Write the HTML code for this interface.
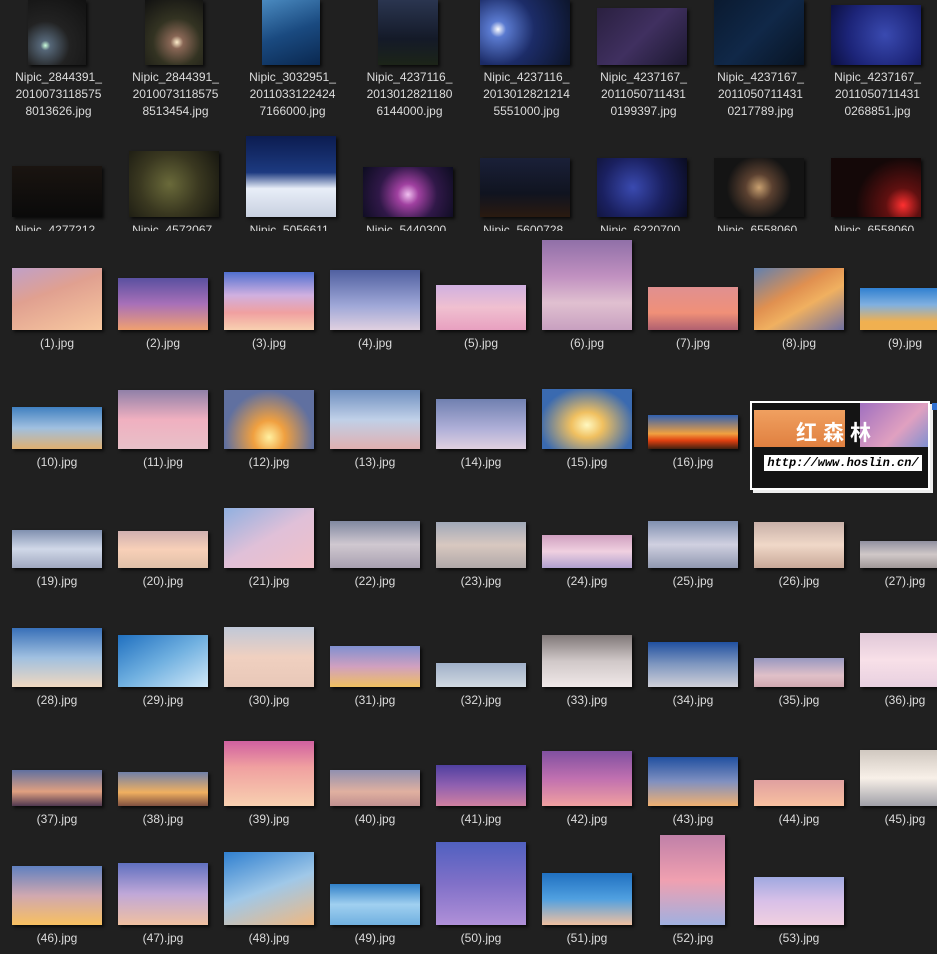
<!DOCTYPE html>
<html><head><meta charset="utf-8"><style>
body{margin:0;width:937px;height:954px;background:#202020;overflow:hidden;position:relative;font-family:"Liberation Sans","Noto Sans CJK SC",sans-serif;}
.t{position:absolute;box-shadow:2px 2px 3px rgba(0,0,0,.7);}
.l{position:absolute;width:106px;text-align:center;color:#dcdcdc;font-size:12px;line-height:17px;}
.n{position:absolute;width:117px;text-align:center;color:#dcdcdc;font-size:12px;line-height:17px;}
.c{overflow:hidden;height:9px;}
</style></head><body>
<!-- row 1 -->
<div class="t" style="left:28px;top:0;width:58px;height:65px;background:radial-gradient(circle at 30% 70%,#cfd 0,#567 8%,#222 40%,#111 100%)"></div>
<div class="t" style="left:145px;top:0;width:58px;height:65px;background:radial-gradient(circle at 55% 65%,#fec 0,#865 12%,#332 45%,#111 100%)"></div>
<div class="t" style="left:262px;top:0;width:58px;height:65px;background:linear-gradient(160deg,#4a8ac0,#1a4a80 50%,#0a2850)"></div>
<div class="t" style="left:378px;top:0;width:60px;height:65px;background:linear-gradient(#2a3550,#141a28 60%,#1c2418)"></div>
<div class="t" style="left:480px;top:0;width:90px;height:65px;background:radial-gradient(circle at 20% 45%,#fff 0,#5a7ad0 10%,#1c2c68 45%,#0c1428 100%)"></div>
<div class="t" style="left:597px;top:8px;width:90px;height:57px;background:linear-gradient(135deg,#2a2040,#403060 50%,#1c1830)"></div>
<div class="t" style="left:714px;top:0;width:90px;height:65px;background:linear-gradient(135deg,#0a1a30,#102848 50%,#081424)"></div>
<div class="t" style="left:831px;top:5px;width:90px;height:60px;background:radial-gradient(circle at 60% 50%,#3a4ab0,#1c2478 60%,#0c1040)"></div>
<div class="n" style="left:0;top:69px">Nipic_2844391_<br>2010073118575<br>8013626.jpg</div>
<div class="n" style="left:117px;top:69px">Nipic_2844391_<br>2010073118575<br>8513454.jpg</div>
<div class="n" style="left:234px;top:69px">Nipic_3032951_<br>2011033122424<br>7166000.jpg</div>
<div class="n" style="left:351px;top:69px">Nipic_4237116_<br>2013012821180<br>6144000.jpg</div>
<div class="n" style="left:468px;top:69px">Nipic_4237116_<br>2013012821214<br>5551000.jpg</div>
<div class="n" style="left:585px;top:69px">Nipic_4237167_<br>2011050711431<br>0199397.jpg</div>
<div class="n" style="left:702px;top:69px">Nipic_4237167_<br>2011050711431<br>0217789.jpg</div>
<div class="n" style="left:819px;top:69px">Nipic_4237167_<br>2011050711431<br>0268851.jpg</div>
<!-- row 2 -->
<div class="t" style="left:12px;top:166px;width:90px;height:51px;background:linear-gradient(#1a1410,#0a0a0a)"></div>
<div class="t" style="left:129px;top:151px;width:90px;height:66px;background:radial-gradient(circle at 45% 50%,#6a6a3a,#3a3820 50%,#161610)"></div>
<div class="t" style="left:246px;top:136px;width:90px;height:81px;background:linear-gradient(#0c1c50,#1c3a80 45%,#e8eef8 65%,#c8d0e0)"></div>
<div class="t" style="left:363px;top:167px;width:90px;height:50px;background:radial-gradient(circle at 50% 55%,#f0c0f0,#a040a0 20%,#301848 55%,#0c0c20)"></div>
<div class="t" style="left:480px;top:158px;width:90px;height:59px;background:linear-gradient(#1a2038,#101420 60%,#2a1a10)"></div>
<div class="t" style="left:597px;top:158px;width:90px;height:59px;background:radial-gradient(circle at 40% 50%,#3a4ab0,#1a2060 50%,#0a0c20)"></div>
<div class="t" style="left:714px;top:158px;width:90px;height:59px;background:radial-gradient(circle at 50% 50%,#c8a070,#5a4030 25%,#141414 60%)"></div>
<div class="t" style="left:831px;top:158px;width:90px;height:59px;background:radial-gradient(circle at 80% 80%,#ff3030,#601010 20%,#140808 55%)"></div>
<div class="n c" style="left:0;top:222px">Nipic_4277212_</div>
<div class="n c" style="left:117px;top:222px">Nipic_4572067_</div>
<div class="n c" style="left:234px;top:222px">Nipic_5056611_</div>
<div class="n c" style="left:351px;top:222px">Nipic_5440300_</div>
<div class="n c" style="left:468px;top:222px">Nipic_5600728_</div>
<div class="n c" style="left:585px;top:222px">Nipic_6220700_</div>
<div class="n c" style="left:702px;top:222px">Nipic_6558060_</div>
<div class="n c" style="left:819px;top:222px">Nipic_6558060_</div>
<!-- row 3 -->
<div class="t" style="left:12px;top:268px;width:90px;height:62px;background:linear-gradient(160deg,#c0a0c8,#e0a090 40%,#f8c8a0)"></div>
<div class="t" style="left:118px;top:278px;width:90px;height:52px;background:linear-gradient(#5a50a0,#a870b8 50%,#f0a070)"></div>
<div class="t" style="left:224px;top:272px;width:90px;height:58px;background:linear-gradient(#5070d0,#d0b0e0 40%,#f0a0a0 70%,#f8d0b0)"></div>
<div class="t" style="left:330px;top:270px;width:90px;height:60px;background:linear-gradient(#5060a0,#a0a8d8 60%,#e0d0e0)"></div>
<div class="t" style="left:436px;top:285px;width:90px;height:45px;background:linear-gradient(#d0b0e0,#f0c0d0 50%,#e8a0c0)"></div>
<div class="t" style="left:542px;top:240px;width:90px;height:90px;background:linear-gradient(#9070a8,#c090c0 40%,#e0c0d0 70%,#c8a0c0)"></div>
<div class="t" style="left:648px;top:287px;width:90px;height:43px;background:linear-gradient(#e09090,#f09078 60%,#b06070)"></div>
<div class="t" style="left:754px;top:268px;width:90px;height:62px;background:linear-gradient(150deg,#6080b0,#e09050 40%,#f0b060 60%,#7070a0)"></div>
<div class="t" style="left:860px;top:288px;width:90px;height:42px;background:linear-gradient(#3080d0,#80b0e0 40%,#f0b050 80%)"></div>
<div class="l" style="left:4px;top:335px">(1).jpg</div>
<div class="l" style="left:110px;top:335px">(2).jpg</div>
<div class="l" style="left:216px;top:335px">(3).jpg</div>
<div class="l" style="left:322px;top:335px">(4).jpg</div>
<div class="l" style="left:428px;top:335px">(5).jpg</div>
<div class="l" style="left:534px;top:335px">(6).jpg</div>
<div class="l" style="left:640px;top:335px">(7).jpg</div>
<div class="l" style="left:746px;top:335px">(8).jpg</div>
<div class="l" style="left:852px;top:335px">(9).jpg</div>
<!-- row 4 -->
<div class="t" style="left:12px;top:407px;width:90px;height:42px;background:linear-gradient(#4080c0,#a0c0e0 50%,#e0b070)"></div>
<div class="t" style="left:118px;top:390px;width:90px;height:59px;background:linear-gradient(#9080a8,#f0b0c0 50%,#e8c0c8)"></div>
<div class="t" style="left:224px;top:390px;width:90px;height:59px;background:radial-gradient(ellipse at 50% 80%,#fff0a0,#f0a040 25%,#6070a0 70%)"></div>
<div class="t" style="left:330px;top:390px;width:90px;height:59px;background:linear-gradient(#7090c0,#c0d0e8 50%,#e0b0b0)"></div>
<div class="t" style="left:436px;top:399px;width:90px;height:50px;background:linear-gradient(#7080b0,#b0b0d8 60%,#e0d0e0)"></div>
<div class="t" style="left:542px;top:389px;width:90px;height:60px;background:radial-gradient(ellipse at 50% 60%,#fff8c0,#f0c060 25%,#3a6ab0 75%)"></div>
<div class="t" style="left:648px;top:415px;width:90px;height:34px;background:linear-gradient(#3060b0,#f0a040 55%,#e04010 75%,#402010)"></div>
<div class="l" style="left:4px;top:454px">(10).jpg</div>
<div class="l" style="left:110px;top:454px">(11).jpg</div>
<div class="l" style="left:216px;top:454px">(12).jpg</div>
<div class="l" style="left:322px;top:454px">(13).jpg</div>
<div class="l" style="left:428px;top:454px">(14).jpg</div>
<div class="l" style="left:534px;top:454px">(15).jpg</div>
<div class="l" style="left:640px;top:454px">(16).jpg</div>
<!-- watermark -->
<div style="position:absolute;left:750px;top:401px;width:176px;height:85px;border:2px solid #fff;background:#141414;box-shadow:3px 3px 0 #eee"></div>
<div style="position:absolute;left:754px;top:410px;width:91px;height:37px;background:linear-gradient(#f0a060,#e08040)"></div>
<div style="position:absolute;left:860px;top:403px;width:68px;height:44px;background:linear-gradient(135deg,#a070c0,#e0a0c0 60%,#8090d0)"></div>
<div style="position:absolute;left:932px;top:403px;width:5px;height:7px;background:#3070d0"></div>
<div style="position:absolute;left:796px;top:420px;color:#fff;font:bold 21px 'Noto Sans CJK SC',sans-serif;letter-spacing:6px;line-height:24px">红森林</div>
<div style="position:absolute;left:764px;top:455px;width:158px;height:16px;background:#fff;color:#000;font:italic bold 12px 'Liberation Mono',monospace;line-height:16px;text-align:center">http://www.hoslin.cn/</div>
<!-- row 5 -->
<div class="t" style="left:12px;top:530px;width:90px;height:38px;background:linear-gradient(#8090b0,#d0d8e8 50%,#a0a8c0)"></div>
<div class="t" style="left:118px;top:531px;width:90px;height:37px;background:linear-gradient(#d0b0b0,#f8d0b8 50%,#e0c0a8)"></div>
<div class="t" style="left:224px;top:508px;width:90px;height:60px;background:linear-gradient(150deg,#90b0e0,#e0c0d8 50%,#f0c0c8)"></div>
<div class="t" style="left:330px;top:521px;width:90px;height:47px;background:linear-gradient(#8088a0,#d0c8d0 50%,#a8a0b0)"></div>
<div class="t" style="left:436px;top:522px;width:90px;height:46px;background:linear-gradient(#a0a8b8,#d8c8c0 50%,#b0a8a8)"></div>
<div class="t" style="left:542px;top:535px;width:90px;height:33px;background:linear-gradient(#d0a0c0,#f0d0e0 50%,#b0a0d0)"></div>
<div class="t" style="left:648px;top:521px;width:90px;height:47px;background:linear-gradient(#8090b0,#d0d0e0 50%,#9098b0)"></div>
<div class="t" style="left:754px;top:522px;width:90px;height:46px;background:linear-gradient(#c8b0a8,#f0d8c8 50%,#c8a898)"></div>
<div class="t" style="left:860px;top:541px;width:90px;height:27px;background:linear-gradient(#9090a0,#d0c8c8 50%,#a09898)"></div>
<div class="l" style="left:4px;top:573px">(19).jpg</div>
<div class="l" style="left:110px;top:573px">(20).jpg</div>
<div class="l" style="left:216px;top:573px">(21).jpg</div>
<div class="l" style="left:322px;top:573px">(22).jpg</div>
<div class="l" style="left:428px;top:573px">(23).jpg</div>
<div class="l" style="left:534px;top:573px">(24).jpg</div>
<div class="l" style="left:640px;top:573px">(25).jpg</div>
<div class="l" style="left:746px;top:573px">(26).jpg</div>
<div class="l" style="left:852px;top:573px">(27).jpg</div>
<!-- row 6 -->
<div class="t" style="left:12px;top:628px;width:90px;height:59px;background:linear-gradient(#3870b8,#a0c0e0 50%,#f0d8c0)"></div>
<div class="t" style="left:118px;top:635px;width:90px;height:52px;background:linear-gradient(150deg,#2070c0,#70b0e0 50%,#d0e8f8)"></div>
<div class="t" style="left:224px;top:627px;width:90px;height:60px;background:linear-gradient(#c0c8d8,#f0d0c0 50%,#e8c8b8)"></div>
<div class="t" style="left:330px;top:646px;width:90px;height:41px;background:linear-gradient(#8090d0,#d0a0c0 50%,#f0c060)"></div>
<div class="t" style="left:436px;top:663px;width:90px;height:24px;background:linear-gradient(#a0b0c8,#d0d8e0)"></div>
<div class="t" style="left:542px;top:635px;width:90px;height:52px;background:linear-gradient(#807878,#d0c8c8 50%,#f0e8e8)"></div>
<div class="t" style="left:648px;top:642px;width:90px;height:45px;background:linear-gradient(#2050a0,#8098c0 50%,#d0d0d8)"></div>
<div class="t" style="left:754px;top:658px;width:90px;height:29px;background:linear-gradient(#9898c0,#e0c0c8 60%,#d0a8b0)"></div>
<div class="t" style="left:860px;top:633px;width:90px;height:54px;background:linear-gradient(#e0c8d8,#f8e0e8 50%,#e8d0e0)"></div>
<div class="l" style="left:4px;top:692px">(28).jpg</div>
<div class="l" style="left:110px;top:692px">(29).jpg</div>
<div class="l" style="left:216px;top:692px">(30).jpg</div>
<div class="l" style="left:322px;top:692px">(31).jpg</div>
<div class="l" style="left:428px;top:692px">(32).jpg</div>
<div class="l" style="left:534px;top:692px">(33).jpg</div>
<div class="l" style="left:640px;top:692px">(34).jpg</div>
<div class="l" style="left:746px;top:692px">(35).jpg</div>
<div class="l" style="left:852px;top:692px">(36).jpg</div>
<!-- row 7 -->
<div class="t" style="left:12px;top:770px;width:90px;height:36px;background:linear-gradient(#6070a0,#e0a080 60%,#503850)"></div>
<div class="t" style="left:118px;top:772px;width:90px;height:34px;background:linear-gradient(#7080a8,#f0b060 60%,#805040)"></div>
<div class="t" style="left:224px;top:741px;width:90px;height:65px;background:linear-gradient(#d060a0,#f0a0a0 40%,#f8d0b0)"></div>
<div class="t" style="left:330px;top:770px;width:90px;height:36px;background:linear-gradient(#9090b0,#e0b0a0 60%,#c09090)"></div>
<div class="t" style="left:436px;top:765px;width:90px;height:41px;background:linear-gradient(#5040a0,#9060b0 50%,#d080a0)"></div>
<div class="t" style="left:542px;top:751px;width:90px;height:55px;background:linear-gradient(#8050a0,#c070b0 50%,#f0a0a0)"></div>
<div class="t" style="left:648px;top:757px;width:90px;height:49px;background:linear-gradient(#2050a0,#8090c0 50%,#f0b070)"></div>
<div class="t" style="left:754px;top:780px;width:90px;height:26px;background:linear-gradient(#e0a0a0,#f8c0a0)"></div>
<div class="t" style="left:860px;top:750px;width:90px;height:56px;background:linear-gradient(#d0c8c0,#f8f0e8 50%,#a0a0a8)"></div>
<div class="l" style="left:4px;top:811px">(37).jpg</div>
<div class="l" style="left:110px;top:811px">(38).jpg</div>
<div class="l" style="left:216px;top:811px">(39).jpg</div>
<div class="l" style="left:322px;top:811px">(40).jpg</div>
<div class="l" style="left:428px;top:811px">(41).jpg</div>
<div class="l" style="left:534px;top:811px">(42).jpg</div>
<div class="l" style="left:640px;top:811px">(43).jpg</div>
<div class="l" style="left:746px;top:811px">(44).jpg</div>
<div class="l" style="left:852px;top:811px">(45).jpg</div>
<!-- row 8 -->
<div class="t" style="left:12px;top:866px;width:90px;height:59px;background:linear-gradient(#6080c0,#d0a8b0 50%,#f8c060)"></div>
<div class="t" style="left:118px;top:863px;width:90px;height:62px;background:linear-gradient(#6070c0,#c0a8d8 50%,#f0c0a0)"></div>
<div class="t" style="left:224px;top:852px;width:90px;height:73px;background:linear-gradient(160deg,#3080d0,#a0c8e8 50%,#f0b880)"></div>
<div class="t" style="left:330px;top:884px;width:90px;height:41px;background:linear-gradient(#3080c8,#a0d0f0 50%,#70b0e0)"></div>
<div class="t" style="left:436px;top:842px;width:90px;height:83px;background:linear-gradient(#5060c0,#8070c8 50%,#b090d8)"></div>
<div class="t" style="left:542px;top:873px;width:90px;height:52px;background:linear-gradient(#2070c0,#50a0e0 50%,#f0c0a0)"></div>
<div class="t" style="left:660px;top:835px;width:65px;height:90px;background:linear-gradient(#c080a8,#f0a0b0 50%,#a0b0e0)"></div>
<div class="t" style="left:754px;top:877px;width:90px;height:48px;background:linear-gradient(#a0a8e0,#d8c0e8 50%,#f0d0e0)"></div>
<div class="l" style="left:4px;top:930px">(46).jpg</div>
<div class="l" style="left:110px;top:930px">(47).jpg</div>
<div class="l" style="left:216px;top:930px">(48).jpg</div>
<div class="l" style="left:322px;top:930px">(49).jpg</div>
<div class="l" style="left:428px;top:930px">(50).jpg</div>
<div class="l" style="left:534px;top:930px">(51).jpg</div>
<div class="l" style="left:640px;top:930px">(52).jpg</div>
<div class="l" style="left:746px;top:930px">(53).jpg</div>
</body></html>
